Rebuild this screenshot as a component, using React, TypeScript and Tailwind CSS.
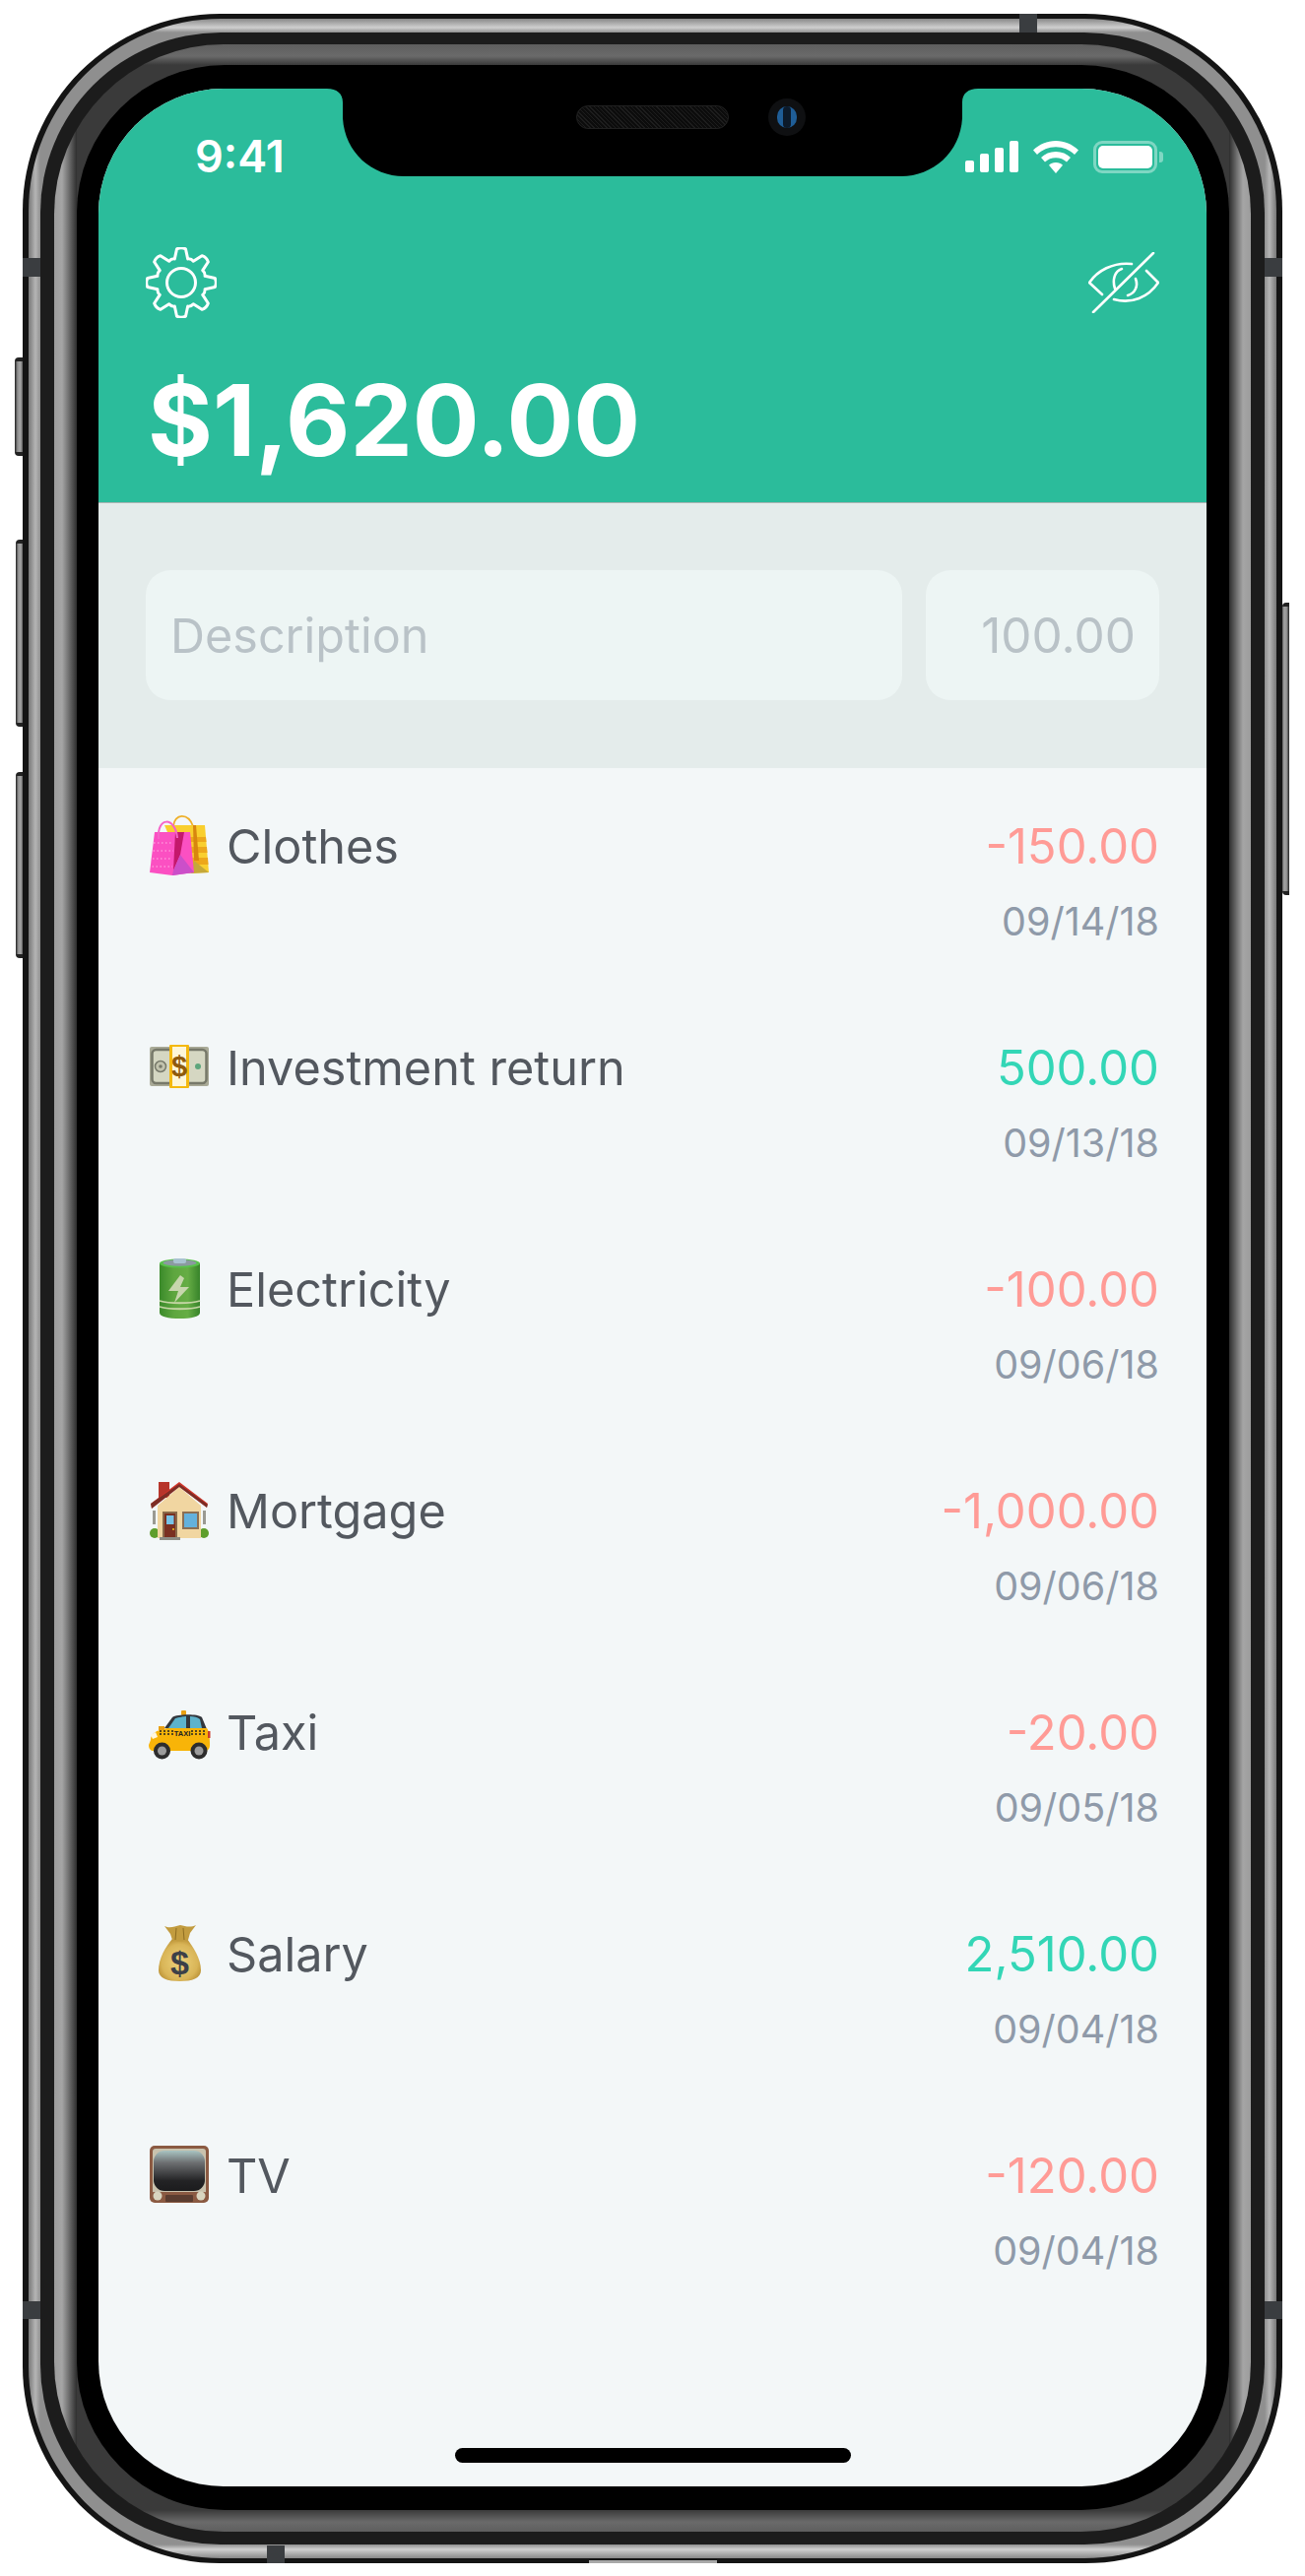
import { ReactNode } from "react";

type Row = { icon: ReactNode; name: string; amount: string; date: string; income?: boolean };

function gearPath() {
  const cx = 36;
  const cy = 36;
  const parts: string[] = [];
  const pt = (r: number, a: number) => `${(cx + r * Math.cos(a)).toFixed(2)} ${(cy + r * Math.sin(a)).toFixed(2)}`;
  for (let i = 0; i < 8; i++) {
    const a = (i * Math.PI) / 4 - Math.PI / 2;
    const root = 0.27;
    const tip = 0.13;
    parts.push(`${i === 0 ? "M" : "L"}${pt(25, a - root)}`);
    parts.push(`L${pt(34.5, a - tip)}`);
    parts.push(`Q${pt(36.5, a)} ${pt(34.5, a + tip)}`);
    parts.push(`L${pt(25, a + root)}`);
    parts.push(`Q${pt(26.5, a + Math.PI / 8)} ${pt(25, a + Math.PI / 4 - root)}`);
  }
  return parts.join(" ") + "Z";
}

function Gear() {
  return (
    <svg width="72" height="72" viewBox="0 0 72 72" fill="none" stroke="white" strokeWidth="3" strokeLinejoin="round">
      <path d={gearPath()} />
      <circle cx="36" cy="36" r="14.5" />
    </svg>
  );
}

function EyeOff() {
  return (
    <svg width="72" height="62" viewBox="0 0 72 62" fill="none" stroke="white" strokeWidth="2.6" strokeLinecap="round" strokeLinejoin="round">
      <path d="M66 1 L5 61" />
      <path d="M14 43 L1 31 C9 19 25 10 44 12" />
      <path d="M59 19 L71 31 C61 46 44 53 26 48" />
      <path d="M34 17 C27 19 24 28 27 37" />
      <path d="M48 27 C51 35 47 42 40 44" />
    </svg>
  );
}

function Signal() {
  return (
    <div className="flex items-end gap-[6px] h-[32px]">
      <div className="w-[9px] h-[12px] rounded-[2px] bg-white" />
      <div className="w-[9px] h-[19px] rounded-[2px] bg-white" />
      <div className="w-[9px] h-[25px] rounded-[2px] bg-white" />
      <div className="w-[9px] h-[32px] rounded-[2px] bg-white" />
    </div>
  );
}

function Wifi() {
  return (
    <svg width="46" height="33" viewBox="0 0 46 33" fill="white">
      <path d="M23 0 C14 0 6.500 3.500 0 9.500 L4 14 C9 9.200 15.500 6.300 23 6.300 C30.500 6.300 37 9.200 42 14 L46 9.500 C39.500 3.500 32 0 23 0Z" />
      <path d="M23 11 C17 11 12 13.200 8 17 L12 21.500 C15 18.700 18.800 17.200 23 17.200 C27.200 17.200 31 18.700 34 21.500 L38 17 C34 13.200 29 11 23 11Z" />
      <path d="M23 22 C20 22 17.800 23 16 24.700 L23 33 L30 24.700 C28.200 23 26 22 23 22Z" />
    </svg>
  );
}

function Battery() {
  return (
    <div className="flex items-center">
      <div className="w-[65px] h-[33px] rounded-[9px] border-[3px] border-white/40 p-[2px]">
        <div className="w-full h-full rounded-[5px] bg-white" />
      </div>
      <div className="ml-[2px] w-[4px] h-[11px] rounded-r-[3px] bg-white/40" />
    </div>
  );
}

function Bags() {
  return (
    <svg width="64" height="64" viewBox="0 0 64 64">
      <path d="M26 13 C27 0 41 -1 46 13" fill="none" stroke="#eeb02a" strokeWidth="1.800" />
      <path d="M17 12 H58 L62 60 L38 61Z" fill="#f9cf2e" />
      <path d="M38 24 L59 24 L59.500 29 L38 29Z M38 34 L60 34 L60.500 40 L38 40Z M38 45 L61 45 L61.500 52 L38 52Z" fill="#eda71a" />
      <path d="M46 12 H49 L52 48 L47 48Z" fill="#d8860f" />
      <path d="M47 48 L62 60 L44 61Z" fill="#c5a83a" />
      <path d="M7 19 H43 L47 60 L25 63 L2 60Z" fill="#fb50c2" />
      <path d="M28 19 H37 L33 42 L26 58Z" fill="#c4186c" />
      <path d="M33 42 L47 60 L25 63 L26 58Z" fill="#cb4fc9" />
      <path d="M11 26 C9 3 28 3 30 25" fill="none" stroke="#f565c9" strokeWidth="2" />
      <path d="M6 30 H26 M5.500 38 H26 M5 46 H25 M4.500 54 H25" stroke="#ffb3e6" strokeWidth="1.200" strokeDasharray="1.500 2.500" />
    </svg>
  );
}

function Money() {
  return (
    <svg width="64" height="64" viewBox="0 0 64 64">
      <rect x="2" y="12" width="60" height="40" rx="2" fill="#a9aa97" />
      <rect x="4.500" y="15" width="55" height="34" rx="1" fill="#d5d7c2" />
      <rect x="4.500" y="15" width="55" height="34" rx="4" fill="none" stroke="#77796a" strokeWidth="2.500" />
      <circle cx="13" cy="32" r="5.500" fill="#c2c3ae" stroke="#77796a" strokeWidth="1.500" />
      <circle cx="13" cy="32" r="1.800" fill="#77796a" />
      <circle cx="51" cy="32" r="3" fill="#5da67c" />
      <rect x="22" y="10" width="20" height="44" rx="1" fill="#f4b90f" />
      <rect x="25" y="12" width="14" height="40" fill="#fdf6d8" />
      <text x="32" y="42" textAnchor="middle" fontFamily="'Liberation Sans',sans-serif" fontWeight="700" fontSize="29" fill="#8f5b0d">$</text>
    </svg>
  );
}

function BatteryCell() {
  return (
    <svg width="64" height="64" viewBox="0 0 64 64">
      <defs>
        <linearGradient id="cell" x1="0" x2="1" y1="0" y2="0">
          <stop offset="0" stopColor="#3a8a2a" />
          <stop offset="0.35" stopColor="#5ea63f" />
          <stop offset="0.7" stopColor="#66ad45" />
          <stop offset="1" stopColor="#37832a" />
        </linearGradient>
      </defs>
      <path d="M12 7 H53 V57 C53 61 44 63 32.500 63 C21 63 12 61 12 57Z" fill="url(#cell)" />
      <ellipse cx="32.500" cy="7" rx="20.500" ry="4.500" fill="#58c24a" />
      <ellipse cx="32.500" cy="6.500" rx="17" ry="3.200" fill="#8b9aa0" />
      <rect x="26" y="2" width="13" height="5" rx="2" fill="#a9c3d1" />
      <path d="M33 19 L21 35 L31 35 L27 47 L42 31 L33 31 L37 22Z" fill="#c7d6ad" />
      <path d="M12 45 C22 48 43 48 53 45 M12 51 C22 54 43 54 53 51" fill="none" stroke="#c7d6a6" strokeWidth="1.800" />
    </svg>
  );
}

function House() {
  return (
    <svg width="64" height="64" viewBox="0 0 64 64">
      <rect x="11" y="4" width="11" height="16" fill="#b7352b" />
      <rect x="5" y="33" width="3" height="14" fill="#9a9a92" />
      <rect x="56" y="33" width="3" height="14" fill="#9a9a92" />
      <circle cx="7" cy="56" r="5" fill="#5e9e2c" />
      <circle cx="57" cy="56" r="5" fill="#5e9e2c" />
      <path d="M32 9 L54 28 V61 H10 V28Z" fill="#f1d6a1" />
      <path d="M3 26 L32 4 L61 26 L60 30 L32 9 L4 31Z" fill="#d0362b" />
      <path d="M3 26 L4 31 L32 9 L60 30 L61 27 L32 6Z" fill="#2a2320" opacity="0.5" />
      <rect x="15" y="34" width="15" height="27" fill="#8a6a4a" />
      <rect x="17" y="36" width="11" height="25" fill="#7a3021" />
      <rect x="19" y="38" width="7.500" height="9" fill="#79c3e6" />
      <circle cx="26" cy="52" r="1" fill="#f2c318" />
      <rect x="35" y="34" width="17" height="18" fill="#8c6f53" />
      <rect x="37" y="36" width="13" height="14" fill="#64b1dc" />
      <rect x="12" y="60" width="21" height="3" fill="#8d8d85" />
    </svg>
  );
}

function Taxi() {
  return (
    <svg width="64" height="64" viewBox="0 0 64 64">
      <rect x="34" y="11" width="5" height="5" rx="1" fill="#e9a012" />
      <path d="M17 29 L25 18 C29 15 50 14 55 18 L60 30Z" fill="#33373d" />
      <path d="M21 29 L28 19 C31 18 37 17 39 17 L39 29Z" fill="#5db3cc" />
      <path d="M43 17 C47 17 51 18 53 20 L55 29 H43Z" fill="#5db3cc" />
      <path d="M3 41 C3 35 8 31 20 29 H60 C62 31 63 38 63 46 C63 50 61 52 58 52 H6 C3 52 1 50 1 46Z" fill="#f8b408" />
      <rect x="61" y="32" width="2.500" height="7" fill="#cc3b2b" />
      <path d="M3 36 L8 33 L10 38 L5 40Z" fill="#fff8e0" />
      <rect x="11" y="27" width="6" height="4" fill="#e9a012" />
      <path d="M12 32 H26 M44 32 H60 M12 35 H26 M44 35 H60" stroke="#222" strokeWidth="1.500" strokeDasharray="2 2" />
      <text x="35" y="37" textAnchor="middle" fontFamily="'Liberation Sans',sans-serif" fontWeight="700" fontSize="7.500" fill="#222">TAXI</text>
      <circle cx="14.500" cy="52" r="8.500" fill="#2d2d2d" />
      <circle cx="14.500" cy="52" r="4.500" fill="#9c9c9c" />
      <circle cx="52" cy="52" r="8.500" fill="#2d2d2d" />
      <circle cx="52" cy="52" r="4.500" fill="#9c9c9c" />
    </svg>
  );
}

function MoneyBag() {
  return (
    <svg width="64" height="64" viewBox="0 0 64 64">
      <defs>
        <radialGradient id="bag" cx="0.5" cy="0.55" r="0.6">
          <stop offset="0" stopColor="#edd27c" />
          <stop offset="0.7" stopColor="#d9b557" />
          <stop offset="1" stopColor="#b48a2f" />
        </radialGradient>
      </defs>
      <path d="M25 18 C18 26 11 38 11 50 C11 58 20 61 32.500 61 C45 61 54 58 54 50 C54 38 46 26 40 18Z" fill="url(#bag)" />
      <path d="M17 5 C23 8 27 5 33 4 C38 5 43 7 49 4 L43 12 L41 19 C36 21 29 21 25 19 L23 13Z" fill="#c29c3f" />
      <path d="M29 7 L28 19 M36 7 L37 19" stroke="#8f6e22" strokeWidth="1" />
      <text x="32.500" y="54" textAnchor="middle" fontFamily="'Liberation Sans',sans-serif" fontWeight="700" fontSize="34" fill="#3c4048">$</text>
    </svg>
  );
}

function Tv() {
  return (
    <svg width="64" height="64" viewBox="0 0 64 64">
      <defs>
        <linearGradient id="tube" x1="0" x2="0" y1="0" y2="1">
          <stop offset="0" stopColor="#a9c4c2" />
          <stop offset="0.3" stopColor="#6d6f71" />
          <stop offset="0.75" stopColor="#232325" />
          <stop offset="1" stopColor="#1b1b1d" />
        </linearGradient>
      </defs>
      <rect x="2" y="3" width="60" height="58" rx="5" fill="#8b5a42" />
      <rect x="5" y="6" width="54" height="51" rx="3" fill="#c9c2ad" />
      <rect x="6" y="8" width="52" height="41" rx="11" fill="url(#tube)" />
      <rect x="4" y="50" width="56" height="10" rx="2" fill="#8b5a42" />
      <circle cx="10" cy="54" r="4.500" fill="#d9d5bf" />
      <circle cx="54" cy="54" r="4.500" fill="#d9d5bf" />
      <rect x="18" y="53" width="28" height="7" rx="1" fill="#5b3d30" />
    </svg>
  );
}

const rows: Row[] = [
  { icon: <Bags />, name: "Clothes", amount: "-150.00", date: "09/14/18" },
  { icon: <Money />, name: "Investment return", amount: "500.00", date: "09/13/18", income: true },
  { icon: <BatteryCell />, name: "Electricity", amount: "-100.00", date: "09/06/18" },
  { icon: <House />, name: "Mortgage", amount: "-1,000.00", date: "09/06/18" },
  { icon: <Taxi />, name: "Taxi", amount: "-20.00", date: "09/05/18" },
  { icon: <MoneyBag />, name: "Salary", amount: "2,510.00", date: "09/04/18", income: true },
  { icon: <Tv />, name: "TV", amount: "-120.00", date: "09/04/18" },
];

function Transaction({ row }: { row: Row }) {
  return (
    <div className="flex justify-between h-[225px] pt-[50px] pl-[50px] pr-[48px]">
      <div className="flex items-start h-[60px]">
        <div className="w-[64px] h-[64px] -mt-[4px]">{row.icon}</div>
        <span className="ml-[16px] text-[48.6px] leading-[60px] text-[#53585f]">{row.name}</span>
      </div>
      <div className="flex flex-col items-end">
        <span className={`text-[49px] leading-[60px] ${row.income ? "text-[#33d6b6]" : "text-[#ff9b96]"}`}>{row.amount}</span>
        <span className="mt-[21px] text-[39.5px] leading-[50px] text-[#8f9aa9]">{row.date}</span>
      </div>
    </div>
  );
}

function Notch() {
  return (
    <div className="absolute top-0 left-[228px] w-[669px] h-[89px]">
      <svg width="669" height="89" viewBox="0 0 669 89" fill="black">
        <path d="M4 0 C14 0 20 5 20 14 V30 C22 65 50 89 82 89 H587 C619 89 647 65 649 30 V14 C649 5 655 0 665 0Z" />
      </svg>
      <div className="absolute left-[257px] top-[17px] w-[155px] h-[24px] rounded-full border border-[#202020] bg-[#111] bg-[repeating-linear-gradient(45deg,#1d1d1d_0,#1d1d1d_1px,#0c0c0c_1px,#0c0c0c_3px)]" />
      <div className="absolute left-[452px] top-[10px] w-[38px] h-[38px] rounded-full bg-[#0f1012] flex items-center justify-center">
        <div className="w-[20px] h-[22px] rounded-full bg-[#1f5d96] flex items-center justify-center">
          <div className="w-[8px] h-[22px] bg-[#0c1a2a] rounded-full" />
        </div>
      </div>
    </div>
  );
}

function Bands() {
  return (
    <>
      <div className="absolute left-0 top-[248px] w-[18px] h-[19px] bg-[#3a3d40]" />
      <div className="absolute right-0 top-[248px] w-[18px] h-[19px] bg-[#3a3d40]" />
      <div className="absolute left-0 top-[2323px] w-[18px] h-[18px] bg-[#3a3d40]" />
      <div className="absolute right-0 top-[2323px] w-[18px] h-[18px] bg-[#3a3d40]" />
      <div className="absolute left-[1012px] top-0 w-[18px] h-[19px] bg-[#3a3d40]" />
      <div className="absolute left-[248px] bottom-0 w-[18px] h-[18px] bg-[#3a3d40]" />
      <div className="absolute left-[575px] bottom-0 w-[130px] h-[3px] bg-[#a8a8a8]" />
    </>
  );
}

function SideButton({ className }: { className: string }) {
  return (
    <div className={`absolute bg-[linear-gradient(to_right,#1d1d1d,#8d8d8d_35%,#a5a5a5_70%,#666)] border-y-[4px] border-[#222] ${className}`} />
  );
}

export default function App() {
  return (
    <div className="w-[1325px] h-[2616px] bg-white pl-[23px] pt-[14px] font-['Inter',sans-serif]">
      <div className="relative w-[1279px] h-[2589px]">
        <SideButton className="-left-[8px] top-[349px] w-[8px] h-[100px] rounded-l-[4px]" />
        <SideButton className="-left-[7px] top-[534px] w-[7px] h-[190px] rounded-l-[4px]" />
        <SideButton className="-left-[7px] top-[770px] w-[7px] h-[189px] rounded-l-[4px]" />
        <SideButton className="-right-[7px] top-[598px] w-[7px] h-[297px] rounded-r-[4px] rotate-180" />

        <div className="w-full h-full rounded-[200px] bg-[#141414] p-[5px] pl-[6px] pr-[6px]">
          <div className="w-full h-full rounded-[195px] p-[14px] px-[12px] bg-[linear-gradient(to_right,#777,#b5b5b5_7px,#8f8f8f_12px,transparent_12px,transparent_calc(100%-12px),#8f8f8f_calc(100%-12px),#b5b5b5_calc(100%-7px),#777),linear-gradient(to_bottom,#888,#cfcfcf_9px,#8f8f8f_14px,#8f8f8f_calc(100%-14px),#cfcfcf_calc(100%-9px),#888)]">
            <div className="w-full h-full rounded-[183px] bg-[#1c1c1c] pt-[12px] pb-[13px] pl-[14px] pr-[14px]">
              <div className="w-full h-full rounded-[172px] pt-[21px] pb-[22px] pl-[23px] pr-[22px] bg-[linear-gradient(to_right,#9c9c9c,#a5a5a5_8px,#2e2e2e_23px,transparent_23px,transparent_calc(100%-22px),#2e2e2e_calc(100%-22px),#a5a5a5_calc(100%-8px),#9c9c9c),linear-gradient(to_bottom,#5e5e5e,#6a6a6a_12px,#3a3a3a_21px,#3a3a3a_calc(100%-22px),#6a6a6a_calc(100%-10px),#5e5e5e)]">
                <div className="w-full h-full rounded-[150px] bg-black pt-[24px] pb-[24px] pl-[22px] pr-[23px]">
                  <div className="relative w-full h-full rounded-[127px] overflow-hidden bg-[#f3f7f8] flex flex-col">
                    <header className="h-[420px] shrink-0 bg-[#2bbc9b] pt-[50px]">
                      <div className="flex items-center justify-between h-[38px] pl-[98px] pr-[44px]">
                        <span className="text-[45px] leading-[38px] font-semibold text-white">9:41</span>
                        <div className="flex items-center gap-[15px]">
                          <Signal />
                          <Wifi />
                          <Battery />
                        </div>
                      </div>
                      <div className="flex items-center justify-between h-[72px] mt-[73px] px-[48px]">
                        <Gear />
                        <EyeOff />
                      </div>
                      <div className="mt-[43px] pl-[50px] text-[100.7px] leading-[120px] font-bold text-white">$1,620.00</div>
                    </header>
                    <div className="flex gap-[24px] shrink-0 h-[270px] border-t border-[#a9b4b3] bg-[#e4eceb] pt-[68px] px-[48px]">
                      <input
                        placeholder="Description"
                        className="min-w-0 flex-1 h-[132px] rounded-[25px] bg-[#edf5f4] px-[25px] text-[48.5px] outline-none placeholder:text-[#b9c2c7]"
                      />
                      <input
                        placeholder="100.00"
                        className="w-[237px] h-[132px] rounded-[25px] bg-[#edf5f4] px-[24px] text-right text-[49.5px] outline-none placeholder:text-[#b9c2c7]"
                      />
                    </div>
                    <div className="flex flex-col">
                      {rows.map((row) => (
                        <Transaction key={row.name} row={row} />
                      ))}
                    </div>
                    <div className="absolute left-[362px] bottom-[24px] w-[402px] h-[15px] rounded-full bg-black" />
                    <Notch />
                  </div>
                </div>
              </div>
            </div>
          </div>
        </div>
        <Bands />
      </div>
    </div>
  );
}
